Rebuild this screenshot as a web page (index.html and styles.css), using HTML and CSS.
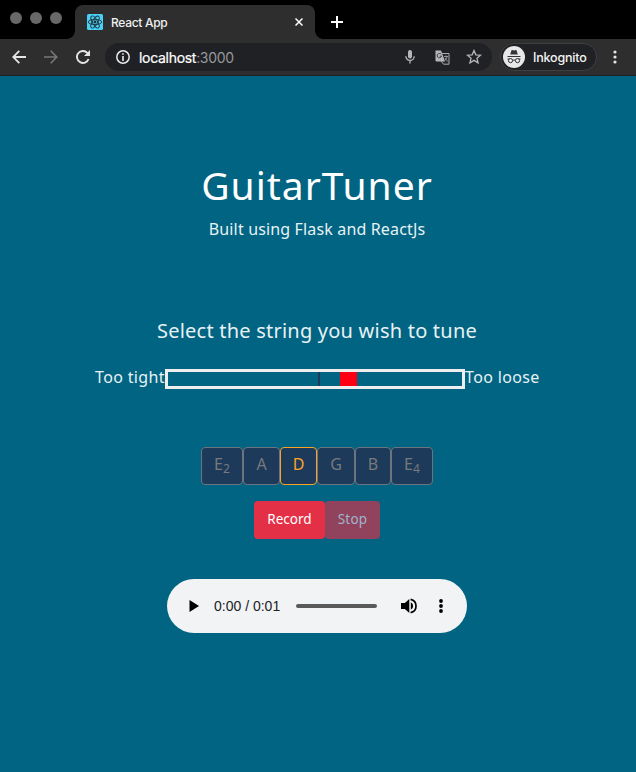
FILE: index.html
```html
<!DOCTYPE html>
<html lang="en">
<head>
<meta charset="utf-8">
<title>React App</title>
<link rel="stylesheet" href="styles.css">
</head>
<body>
<header class="browser">
  <div class="tabs">
    <div class="lights"><i></i><i></i><i></i></div>
    <div class="tab">
      <svg class="favicon" width="16" height="16" viewBox="0 0 16 16"><rect width="16" height="16" rx="1.5" fill="#49d1f5"/><g fill="none" stroke="#20313a" stroke-width=".9"><ellipse cx="8" cy="8" rx="6.8" ry="2.6"/><ellipse cx="8" cy="8" rx="6.8" ry="2.6" transform="rotate(60 8 8)"/><ellipse cx="8" cy="8" rx="6.8" ry="2.6" transform="rotate(120 8 8)"/></g><circle cx="8" cy="8" r="1.4" fill="#20313a"/></svg>
      <span class="tab-title">React App</span>
      <svg class="close" width="8" height="8" viewBox="0 0 8 8"><path d="M.5.5l7 7M7.5.5l-7 7" stroke="#fff" stroke-width="1.5"/></svg>
    </div>
    <svg class="plus" width="12" height="12" viewBox="0 0 12 12"><path d="M6 0v12M0 6h12" stroke="#fff" stroke-width="2"/></svg>
  </div>
  <div class="toolbar">
    <svg class="nav" width="14" height="14" viewBox="0 0 14 14"><path d="M14 7H1.5M7.3.8L1.2 7l6.1 6.2" fill="none" stroke="#e4e5e6" stroke-width="1.8"/></svg>
    <svg class="nav" width="14" height="14" viewBox="0 0 14 14"><path d="M0 7h12.500M6.700.8L12.800 7l-6.100 6.200" fill="none" stroke="#77787a" stroke-width="1.600"/></svg>
    <svg class="nav" width="14" height="14" viewBox="0 0 14 14"><path d="M12.600 9A6 6 0 1 1 11.300 2.800L12.200 3.700" fill="none" stroke="#e4e5e6" stroke-width="1.900"/><path d="M14 0v6H8z" fill="#e4e5e6"/></svg>
    <div class="address">
      <svg width="14" height="14" viewBox="0 0 14 14"><circle cx="7" cy="7" r="6.200" fill="none" stroke="#e8eaed" stroke-width="1.500"/><path d="M7 3.200v1.600M7 6v5" stroke="#e8eaed" stroke-width="1.600"/></svg>
      <span class="url">localhost<span>:3000</span></span>
      <svg class="mic" width="10" height="14" viewBox="0 0 10 14"><rect x="3" y="0" width="4" height="8.400" rx="2" fill="#b5b6b8"/><path d="M.8 6.200a4.200 4.200 0 0 0 8.400 0M5 10.400V13.500" fill="none" stroke="#b5b6b8" stroke-width="1.300"/></svg>
      <svg class="translate" width="15" height="15" viewBox="0 0 15 15"><path d="M6.500 3.500H14v10.700H8.500L6 11" fill="#26272b" stroke="#a9abad"/><path d="M.5.500h5.500l4 11H1.500a1 1 0 0 1-1-1z" fill="#b5b6b8"/><path d="M6.200 4.400A2.200 2.200 0 1 0 6.500 6.200H4.700" fill="none" stroke="#3b3c3f"/><path d="M9 6.500h4M11 5.500v1M12.200 6.500Q11.200 9.300 9.800 10.500M10 8l2.800 3.500" fill="none" stroke="#a9abad" stroke-width=".8"/></svg>
      <svg class="star" width="16" height="16" viewBox="0 0 16 16"><path d="M8 1.500l1.850 4.300 4.650.4-3.550 3.050 1.100 4.550L8 11.350 3.950 13.800l1.100-4.550L1.500 6.200l4.650-.4z" fill="none" stroke="#b5b6b8" stroke-width="1.300"/></svg>
    </div>
    <div class="profile">
      <svg width="22" height="22" viewBox="0 0 22 22"><circle cx="11" cy="11" r="11" fill="#e8e8e9"/><path d="M7.200 8.500l1.200-4q.2-.5.800-.4l1.800.5 1.800-.5q.6-.1.800.4L14.800 8.500zM4.500 10h13v1h-13z" fill="#333437"/><g fill="none" stroke="#333437"><circle cx="7.500" cy="14.600" r="2.100"/><circle cx="14.500" cy="14.600" r="2.100"/><path d="M9.700 14.300q1.300-.7 2.600 0M4.500 13h2M15.500 13h2"/></g></svg>
      <span>Inkognito</span>
    </div>
    <svg class="more" width="4" height="14" viewBox="0 0 4 14" fill="#e4e5e6"><circle cx="2" cy="2" r="1.600"/><circle cx="2" cy="7" r="1.600"/><circle cx="2" cy="12" r="1.600"/></svg>
  </div>
</header>
<main>
  <h1>GuitarTuner</h1>
  <p class="subtitle">Built using Flask and ReactJs</p>
  <h2>Select the string you wish to tune</h2>
  <div class="meter">
    <span class="label tight">Too tight</span>
    <div class="gauge"><i class="center"></i><i class="needle"></i></div>
    <span class="label loose">Too loose</span>
  </div>
  <div class="strings">
    <button class="e">E<sub>2</sub></button><button class="a">A</button><button class="d selected">D</button><button class="g">G</button><button class="b">B</button><button class="e">E<sub>4</sub></button>
  </div>
  <div class="controls"><button class="record">Record</button><button class="stop">Stop</button></div>
  <div class="player">
    <svg width="10" height="12" viewBox="0 0 10 12"><path d="M.5 0v12L10 6z"/></svg>
    <span class="time">0:00 / 0:01</span>
    <div class="track"></div>
    <svg class="volume" width="16" height="16" viewBox="0 0 16 16"><path d="M0 5v6h3.800L8.300 15V1L3.800 5z"/><path d="M9.800 4.300a4.100 4.100 0 0 1 0 7.400z"/><path d="M9.600 1.300a6.850 6.850 0 0 1 0 13.400" fill="none" stroke="#000" stroke-width="1.700"/></svg>
    <svg class="menu" width="4" height="14" viewBox="0 0 4 14"><circle cx="2" cy="2" r="1.900"/><circle cx="2" cy="7" r="1.900"/><circle cx="2" cy="12" r="1.900"/></svg>
  </div>
</main>
</body>
</html>
```
FILE: styles.css
```css
* { box-sizing: border-box; }
body { margin: 0; width: 636px; height: 772px; overflow: hidden; background: #006482; color: #e8f2f5; font-family: "Noto Sans", sans-serif; }
svg { display: block; flex: none; }
.browser { height: 76px; background: #2e2e2f; border-bottom: 1px solid #202124; font-family: Inter, "Liberation Sans", sans-serif; }
.tabs { height: 39px; background: #000; display: flex; align-items: flex-start; }
.lights { display: flex; gap: 8px; padding: 12px 0 0 10px; width: 75px; }
.lights i { width: 12px; height: 12px; border-radius: 50%; background: #686868; }
.tab { position: relative; width: 240px; height: 34px; margin-top: 5px; background: #2e2e2f; border-radius: 8px 8px 0 0; display: flex; align-items: center; padding: 0 12px; }
.tab::before, .tab::after { content: ""; position: absolute; bottom: 0; width: 8px; height: 8px; }
.tab::before { left: -8px; background: radial-gradient(circle at 0 0, #000 7.5px, #2e2e2f 8px); }
.tab::after { right: -8px; background: radial-gradient(circle at 100% 0, #000 7.5px, #2e2e2f 8px); }
.tab-title { margin-left: 8px; font-size: 12px; font-weight: 500; letter-spacing: -.3px; color: #f1f1f1; white-space: nowrap; }
.close { margin-left: auto; }
.plus { margin: 16px 0 0 16px; }
.toolbar { height: 36px; display: flex; align-items: center; padding-left: 12px; }
.nav { margin-right: 18px; }
.address { width: 387px; height: 28px; margin-left: -3px; border-radius: 14px; background: #202124; display: flex; align-items: center; padding: 0 10px 0 11px; }
.url { margin-left: 9px; font-size: 14px; letter-spacing: -.3px; color: #fff; -webkit-text-stroke: .2px #fff; white-space: nowrap; }
.url span { color: #97989b; -webkit-text-stroke: 0; }
.mic { margin-left: auto; }
.translate { margin-left: 20px; }
.star { margin-left: 16px; }
.profile { width: 97px; height: 28px; margin-left: 8px; border: 1px solid #3e3f42; border-radius: 14px; background: #202124; display: flex; align-items: center; padding-left: 2px; font-size: 12.500px; font-weight: 500; letter-spacing: -.2px; color: #f4f4f4; }
.profile span { margin-left: 8px; }
.more { margin-left: 16px; }
main { display: flex; flex-direction: column; align-items: center; width: 634px; padding-top: 79px; }
h1, h2, p { margin: 0; font-weight: 400; white-space: nowrap; }
h1 { font-size: 39px; line-height: 60px; letter-spacing: 1px; color: #fff; }
.subtitle { margin-top: 1px; font-size: 16px; line-height: 26px; letter-spacing: .15px; }
h2 { margin-top: 74px; font-size: 20px; line-height: 30px; letter-spacing: .22px; }
.meter { margin-top: 23px; display: flex; height: 20px; width: 444px; }
.label { width: 70px; line-height: 17px; font-size: 16px; letter-spacing: .35px; white-space: nowrap; }
.loose { width: 74px; }
.gauge { position: relative; width: 300px; height: 20px; border: 3px solid #eee; }
.gauge i { position: absolute; top: 0; height: 14px; }
.center { left: 150px; width: 2px; background: #1e3a5a; }
.needle { left: 172px; width: 17px; background: #ff0012; }
button { margin: 0; padding: 0; height: 38px; font-family: inherit; border-radius: 4px; }
.strings { display: flex; margin-top: 58px; }
.strings button { border: 1px solid #6c757d; background: #1e3a5a; color: #77797c; font-size: 16px; line-height: 24px; padding-bottom: 4px; }
sub { font-size: 12px; line-height: 0; position: relative; top: 3px; vertical-align: baseline; }
.e { width: 42px; } .a, .d { width: 37px; } .g { width: 38px; } .b { width: 36px; }
.strings .selected { border-color: #fca326; color: #fca326; }
.controls { display: flex; margin-top: 16px; }
.controls button { border: 0; font-size: 13.500px; padding-bottom: 3px; }
.record { width: 71px; background: #e43047; color: #fff; }
.controls .stop { width: 55px; background: #91425c; color: #9fb4ca; letter-spacing: .2px; }
.player { width: 300px; height: 54px; margin-top: 40px; border-radius: 27px; background: #f1f3f4; display: flex; align-items: center; padding-left: 22px; }
.time { width: 66px; margin-left: 15px; font: 14px "Liberation Sans", sans-serif; color: #202124; white-space: nowrap; }
.track { width: 81px; height: 4px; margin-left: 16px; border-radius: 2px; background: #5a5a5a; }
.volume { margin-left: 24px; }
.menu { margin-left: 22px; }
```
